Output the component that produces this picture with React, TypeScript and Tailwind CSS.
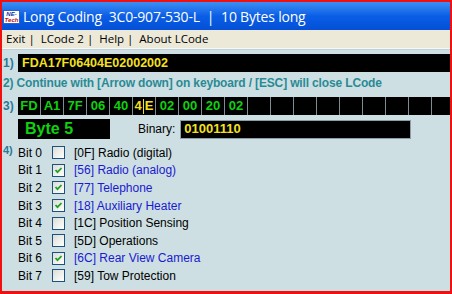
import React from "react";

const bytes = ["FD", "A1", "7F", "06", "40", "4E", "02", "00", "20", "02"];
const bits = [
  { code: "0F", name: "Radio (digital)", on: false },
  { code: "56", name: "Radio (analog)", on: true },
  { code: "77", name: "Telephone", on: true },
  { code: "18", name: "Auxiliary Heater", on: true },
  { code: "1C", name: "Position Sensing", on: false },
  { code: "5D", name: "Operations", on: false },
  { code: "6C", name: "Rear View Camera", on: true },
  { code: "59", name: "Tow Protection", on: false },
];

function Check({ on }: { on: boolean }) {
  return (
    <div className="w-[13px] h-[13px] border border-[#1c5180] bg-gradient-to-br from-[#dcdcd6] to-[#ffffff] flex items-center justify-center">
      {on && (
        <svg width="9" height="9" viewBox="0 0 9 9">
          <path d="M1.5 4 L3.5 6.2 L7.5 2" stroke="#21a121" strokeWidth="1.8" fill="none" />
        </svg>
      )}
    </div>
  );
}

export default function App() {
  const cells = Array.from({ length: 19 }, (_, i) => bytes[i] ?? "");
  return (
    <div
      className="w-[452px] h-[294px] overflow-hidden border-t-2 border-l-2 border-r-2 border-b-[3px] border-[#f01010] flex flex-col bg-[#cddfe3]"
      style={{ fontFamily: '"Liberation Sans", Arial, sans-serif' }}
    >
      {/* title bar */}
      <div className="h-[28px] shrink-0 flex items-center bg-gradient-to-b from-[#3d8ef2] via-[#0a5ee6] to-[#0450d6] pl-[1px]">
        <div className="w-[17px] h-[14px] bg-white border border-[#3060c0] flex flex-col items-center justify-center leading-none mt-[2px]">
          <span className="text-[6px] font-bold italic text-[#1030a0] leading-[6px]">NE-</span>
          <span className="text-[6px] font-bold italic text-[#c01010] leading-[6px]">Tech</span>
        </div>
        <span
          className="ml-[3px] text-white text-[14px] tracking-[-0.2px] whitespace-pre mt-[1px]"
          style={{ fontFamily: '"Open Sans", "DejaVu Sans", sans-serif' }}
        >
          Long Coding  3C0-907-530-L  |  10 Bytes long
        </span>
      </div>
      {/* menu */}
      <div
        className="h-[19px] shrink-0 bg-[#ece9d8] flex items-center pl-[4px] text-[11.5px] text-black whitespace-pre border-b border-[#f4f8f8]"
        style={{ fontFamily: '"Open Sans", "DejaVu Sans", sans-serif' }}
      >
        Exit |  LCode 2 |  Help |  About LCode
      </div>
      <div className="h-[1px] bg-[#c0d0d4] shrink-0" />

      {/* row 1 */}
      <div className="flex items-center mt-[4px] h-[18px]">
        <span className="w-[16px] pl-[1px] text-[12px] font-bold text-[#2a7a98]">1)</span>
        <div className="flex-1 h-[18px] bg-black flex items-center pl-[4px] text-[12.5px] font-bold text-[#f5e020]">
          FDA17F06404E02002002
        </div>
      </div>

      {/* row 2 */}
      <div className="h-[22px] flex items-center pl-[1px] text-[12px] tracking-[-0.15px] font-bold text-[#2a8a94] whitespace-pre">
        2) Continue with [Arrow down] on keyboard / [ESC] will close LCode
      </div>

      {/* row 3 */}
      <div className="flex items-center mt-[3px] h-[18px]">
        <span className="w-[16px] pl-[1px] text-[12px] font-bold text-[#2a7a98]">3)</span>
        <div className="flex-1 h-[18px] bg-black flex overflow-hidden">
          {cells.map((b, i) => (
            <div
              key={i}
              className="w-[23px] shrink-0 h-full border-r border-[#7e8c94] flex items-center justify-center text-[13px] font-bold text-[#10d010]"
            >
              {i === 5 ? (
                <span className="text-[#f5e020] flex items-center">
                  4<span className="w-[1px] h-[15px] bg-[#f5e020] mx-[1px]" />E
                </span>
              ) : (
                b
              )}
            </div>
          ))}
        </div>
      </div>

      {/* byte / binary */}
      <div className="flex items-center mt-[4px] h-[20px] pl-[16px]">
        <div className="w-[92px] h-[20px] bg-black flex items-center pl-[7px] text-[16px] font-bold text-[#10d010]">
          Byte 5
        </div>
        <span className="ml-[28px] text-[12px] text-black">Binary:</span>
        <div className="ml-[5px] w-[231px] h-[19px] bg-black border border-[#8aa0a8] flex items-center pl-[3px] text-[13px] font-bold text-[#f5e020]">
          01001110
        </div>
      </div>

      {/* bits */}
      <div className="flex mt-[5px]">
        <span className="w-[16px] pl-[1px] text-[11px] font-bold text-[#2a7a98] leading-[12px]">4)</span>
        <div className="grid auto-rows-[17.6px]">
          {bits.map((b, i) => (
            <div key={i} className="flex items-center text-[12px]">
              <span className="w-[34px] text-black">Bit {i}</span>
              <Check on={b.on} />
              <span className={"ml-[9px] " + (b.on ? "text-[#1a1ad0]" : "text-black")}>
                [{b.code}] {b.name}
              </span>
            </div>
          ))}
        </div>
      </div>
    </div>
  );
}
